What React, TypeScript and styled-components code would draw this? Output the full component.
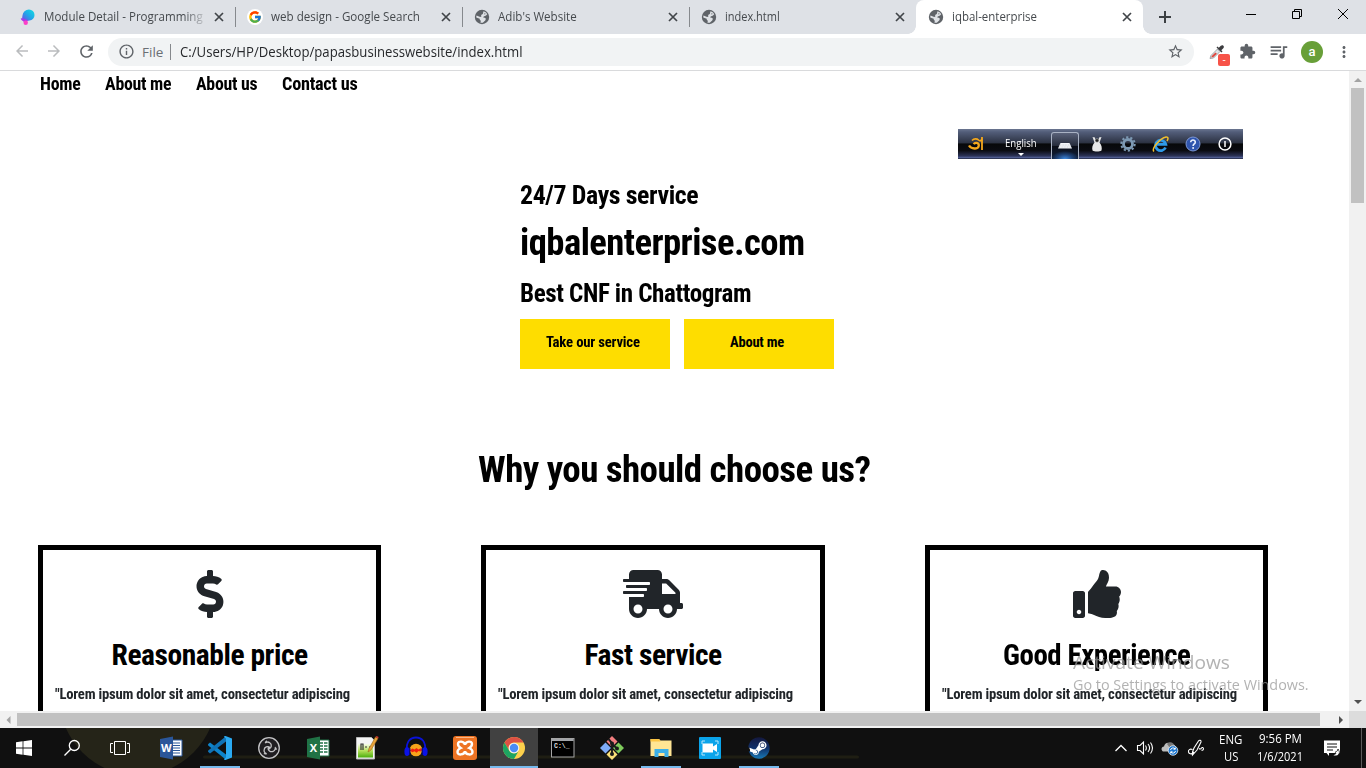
import React, { useLayoutEffect, useRef, useState } from "react";
import styled, { createGlobalStyle, css } from "styled-components";
import { FaDollarSign, FaShippingFast, FaThumbsUp, FaSteam } from "react-icons/fa";
import {
  MdArrowBack, MdArrowForward, MdRefresh, MdInfoOutline,
  MdStarBorder, MdExtension, MdQueueMusic, MdMoreVert,
} from "react-icons/md";
import { FcGoogle } from "react-icons/fc";

const GlobalStyle = createGlobalStyle`
  * { box-sizing: border-box; }
  html, body { margin: 0; padding: 0; overflow: hidden; background: #fff; }
  svg { display: block; flex: none; }
`;

const display = `Roboto, "Liberation Sans", sans-serif`;
const ui = `"Open Sans", "Noto Sans", sans-serif`;

/* ---------- text squeezed to a given width ---------- */
const FitBox = styled.span<{ $w: number; $lh: number }>`
  display: block;
  flex: none;
  width: ${(p) => p.$w}px;
  height: ${(p) => p.$lh}px;
  white-space: nowrap;
`;
const FitInner = styled.span<{ $size: number; $lh: number; $weight: number; $ui: boolean }>`
  display: inline-block;
  vertical-align: top;
  transform-origin: 0 0;
  font-family: ${(p) => (p.$ui ? ui : display)};
  font-stretch: ${(p) => (p.$ui ? "100%" : "75%")};
  letter-spacing: ${(p) => (p.$ui ? "0" : "-0.015em")};
  font-size: ${(p) => p.$size}px;
  font-weight: ${(p) => p.$weight};
  line-height: ${(p) => p.$lh}px;
`;
type FitProps = { w: number; size: number; lh: number; weight?: number; chrome?: boolean; children: string };
function Fit({ w, size, lh, weight = 750, chrome = false, children }: FitProps) {
  const ref = useRef<HTMLSpanElement>(null);
  const [k, setK] = useState(1);
  useLayoutEffect(() => {
    if (ref.current) setK(w / ref.current.offsetWidth);
  }, [w]);
  return (
    <FitBox $w={w} $lh={lh}>
      <FitInner ref={ref} $size={size} $lh={lh} $weight={weight} $ui={chrome} style={{ transform: `scaleX(${k})` }}>
        {children}
      </FitInner>
    </FitBox>
  );
}

/* ---------- window frame ---------- */
const Screen = styled.div`
  position: relative;
  width: 1366px;
  height: 768px;
  display: flex;
  flex-direction: column;
  overflow: hidden;
  background: #fff;
`;
const TabStrip = styled.div`
  display: flex;
  height: 34px;
  padding-left: 8px;
  background: #dee1e6;
`;
const TabItem = styled.div<{ $active?: boolean; $line?: boolean }>`
  position: relative;
  display: flex;
  align-items: center;
  width: 227px;
  height: 34px;
  padding: 0 11px 0 12px;
  color: #45494d;
  ${(p) => p.$line && css`
    &::after {
      content: "";
      position: absolute;
      right: -1px;
      top: 7px;
      width: 1px;
      height: 20px;
      background: #86898d;
    }
  `}
  ${(p) => p.$active && css`
    background: #fff;
    border-radius: 8px 8px 0 0;
    &::before, &::after {
      content: "";
      position: absolute;
      bottom: 0;
      width: 8px;
      height: 8px;
    }
    &::before { left: -8px; background: radial-gradient(circle at 0 0, transparent 7.5px, #fff 8px); }
    &::after { right: -8px; background: radial-gradient(circle at 100% 0, transparent 7.5px, #fff 8px); }
  `}
`;
const Favicon = styled.span`
  width: 16px;
  height: 16px;
  margin-right: 8px;
  color: #5f6368;
`;
const GoogleDisc = styled.span`
  display: flex;
  width: 16px;
  height: 16px;
  align-items: center;
  justify-content: center;
  border-radius: 50%;
  background: #fff;
`;
const TabTitle = styled.span<{ $fade?: boolean }>`
  flex: 1;
  overflow: hidden;
  ${(p) => p.$fade && css`mask-image: linear-gradient(90deg, #000 82%, transparent 97%);`}
`;
const WindowButtons = styled.div`
  display: flex;
  align-items: center;
  gap: 36px;
  height: 28px;
  margin-left: 75px;
`;
const NewTab = styled.div`
  display: flex;
  align-items: center;
  margin-left: 16px;
`;

const Toolbar = styled.div`
  display: flex;
  align-items: center;
  height: 37px;
  padding: 0 13px 1px 13px;
  border-bottom: 1px solid #d9dadc;
  color: #5f6368;
`;
const NavIcons = styled.div`
  display: flex;
  gap: 14px;
  width: 95px;
`;
const Address = styled.div`
  display: flex;
  flex: none;
  align-items: center;
  width: 1086px;
  height: 28px;
  padding: 0 10px;
  border-radius: 14px;
  background: #f1f3f4;
`;
const Rule = styled.span`
  width: 1px;
  height: 16px;
  margin: 0 9px 0 7px;
  background: #85888c;
`;
const UrlText = styled.span`
  flex: 1;
  color: #26282b;
`;
const FileLabel = styled.span`
  margin-left: 7px;
  color: #6b6f74;
`;
const Extensions = styled.div`
  display: flex;
  align-items: center;
  gap: 12px;
  margin-left: 14px;
`;
const Dropper = styled.span`
  position: relative;
  width: 18px;
  height: 18px;
  margin-right: 1px;
`;
const Badge = styled.span`
  position: absolute;
  left: 10px;
  top: 11px;
  width: 12px;
  height: 12px;
  border-radius: 2px;
  background: #f75348;
  color: #fff;
  text-align: center;
  font: 10px/11px ${ui};
`;
const Avatar = styled.span`
  width: 22px;
  height: 22px;
  border-radius: 50%;
  background: #689f38;
  color: #fff;
  text-align: center;
  font: 500 13px/21px Roboto, sans-serif;
`;

/* ---------- page ---------- */
const Viewport = styled.div`
  display: flex;
  height: 640px;
`;
const Page = styled.main`
  width: 1349px;
  height: 640px;
  overflow: hidden;
  color: #000;
`;
const Menu = styled.nav`
  display: flex;
  gap: 24.5px;
  padding-left: 40px;
`;
const Hero = styled.section`
  padding: 81px 0 0 520px;
`;
const Gap = styled.div<{ $top: number; $left?: number }>`
  margin-top: ${(p) => p.$top}px;
  margin-left: ${(p) => p.$left ?? 0}px;
`;
const Actions = styled.div`
  display: flex;
  gap: 14px;
  margin-top: 8px;
`;
const Action = styled.div`
  display: flex;
  justify-content: center;
  width: 150px;
  height: 50px;
  padding-right: 4px;
  background: #fedd00;
`;
const Question = styled.h2`
  display: flex;
  justify-content: center;
  margin: 76px 0 50px;
`;
const Cards = styled.section`
  display: grid;
  grid-template-columns: 343px 344px 343px;
  column-gap: 100px;
  padding-left: 38px;
`;
const Card = styled.article`
  display: flex;
  flex-direction: column;
  align-items: center;
  height: 300px;
  padding: 20px 12px 0;
  border: 5px solid #000;
`;
const CardIcon = styled.div`
  height: 48px;
  margin-bottom: 17px;
  color: #212529;
`;
const CardText = styled.div`
  align-self: flex-start;
  margin-top: 8px;
  color: #212529;
`;

const VTrack = styled.div`
  display: flex;
  flex-direction: column;
  align-items: center;
  justify-content: space-between;
  width: 17px;
  background: #f1f1f1;
`;
const VThumb = styled.div`
  width: 13px;
  height: 115px;
  margin-bottom: auto;
  background: #c1c1c1;
`;
const HTrack = styled.div`
  display: flex;
  align-items: center;
  height: 17px;
  background: #f1f1f1;
`;
const HThumb = styled.div`
  width: 1303px;
  height: 13px;
  background: #c1c1c1;
`;
const Corner = styled.div`
  width: 17px;
  height: 17px;
  background: #dcdcdc;
`;
const ArrowCell = styled.div<{ $w?: number }>`
  display: flex;
  align-items: center;
  justify-content: center;
  width: ${(p) => p.$w ?? 17}px;
  height: 17px;
`;

/* ---------- floating keyboard bar ---------- */
const KeyboardBar = styled.div`
  position: absolute;
  left: 958px;
  top: 129px;
  display: flex;
  align-items: center;
  width: 285px;
  height: 30px;
  padding-left: 10px;
  background: linear-gradient(#6a7590 0, #525d79 10%, #2c3242 46%, #07080a 50%, #0b0c12 72%, #2c3358 90%, #55639a 96%, #15182a 100%);
`;
const Lang = styled.div`
  display: flex;
  flex-direction: column;
  align-items: center;
  width: 32px;
  height: 30px;
  margin: 0 14px 0 19px;
  padding-top: 4px;
  color: #fff;
`;
const PressedKey = styled.div`
  display: flex;
  align-items: center;
  justify-content: center;
  align-self: flex-end;
  width: 28px;
  height: 27px;
  border: 1px solid #a9b2c4;
  border-bottom: 0;
  border-radius: 3px 3px 0 0;
  background: radial-gradient(ellipse 14px 8px at 50% 100%, #3f8ae0 0, rgba(38, 84, 150, 0.7) 55%, transparent 100%), linear-gradient(#5a627a, #262c3c 48%, #0a0d16 50%, #10203e);
`;
const BarIcons = styled.div`
  display: flex;
  align-items: center;
  gap: 16px;
  margin-left: 11px;
`;

const Watermark = styled.div`
  position: absolute;
  left: 1073px;
  top: 649px;
  color: rgba(148, 148, 148, 0.72);
`;

/* ---------- taskbar ---------- */
const Taskbar = styled.footer`
  position: relative;
  display: flex;
  height: 40px;
  background: #101010;
  color: #fff;
`;
const Backdrop = styled.svg`
  position: absolute;
  left: 0;
  top: 0;
`;
const SystemKeys = styled.div`
  position: relative;
  display: flex;
  width: 147px;
`;
const Apps = styled.div`
  position: relative;
  display: flex;
  gap: 1px;
`;
const Slot = styled.div<{ $bar?: "short" | "full" }>`
  position: relative;
  display: flex;
  align-items: center;
  justify-content: center;
  width: 48px;
  height: 40px;
  background: ${(p) => (p.$bar === "full" ? "#414141" : "transparent")};
  ${(p) => p.$bar && css`
    &::after {
      content: "";
      position: absolute;
      bottom: 0;
      left: ${p.$bar === "full" ? 0 : 4}px;
      right: ${p.$bar === "full" ? 0 : 4}px;
      height: 2px;
      background: #76b9ed;
    }
  `}
`;
const Tray = styled.div`
  display: flex;
  align-items: center;
  margin-left: 331px;
`;
const TrayIcons = styled.div`
  display: flex;
  align-items: center;
  gap: 7.5px;
  width: 105px;
`;
const Stack = styled.div<{ $w: number }>`
  display: flex;
  flex-direction: column;
  align-items: center;
  width: ${(p) => p.$w}px;
`;
const Notice = styled.div`
  margin-left: 21px;
`;
const PeekEdge = styled.div`
  width: 1px;
  height: 40px;
  margin-left: 20px;
  background: #5a5a5a;
`;

/* ---------- drawings ---------- */
const Globe = () => (
  <svg width="16" height="16" viewBox="0 0 16 16">
    <circle cx="8" cy="8" r="7.200" fill="#5f6368" />
    <path d="M9.500 2.300c1.600.4 3 1.500 3.700 3L12 6.500c-.6.6-1.700.3-2.200 1L9 8.200 11.200 9c.9.500.7 1.700 0 2.400L8.800 13.700c-.9.100-1.800 0-2.500-.3l.7-1.700c-.9-.4-1.400-1-1.300-2L2.300 8.500c-.1-.8 0-1.300.2-1.900l3.700 1.300 1.200-.5-.3-1.500 1.700-1z" fill="#dfe2e6" />
    <path d="M10.500 3.800l1.500 1-1.300 1-1-.8z" fill="#5f6368" opacity=".5" />
  </svg>
);
const CloseX = () => (
  <svg width="10" height="10" viewBox="0 0 10 10"><path d="M1 1l8 8M9 1L1 9" stroke="#414549" strokeWidth="1.700" /></svg>
);
const Swirl = () => (
  <svg width="16" height="16" viewBox="0 0 16 16">
    <defs><linearGradient id="sw" x1="1" y1="0" x2="0" y2="1"><stop offset="0" stopColor="#14dfe0" /><stop offset=".5" stopColor="#1fa8e8" /><stop offset="1" stopColor="#7545e8" /></linearGradient></defs>
    <path d="M2.500 6.500A6.400 6.400 0 0 1 9 .5a5.500 5.500 0 0 1 5.500 5.500 5.300 5.300 0 0 1-5 5.500C7 11.700 6 12.500 4 11.800 1.500 11 2.200 8.500 2.500 6.500z" fill="url(#sw)" />
    <path d="M.8 9.500c2-1 4 .5 7.200 1.800-.8.500-1 1-1 2.200H4c0-1.600-3.100-2-3.200-4z" fill="#a83ae6" />
    <circle cx="5.700" cy="13.700" r="2.200" fill="#fb3fc8" />
  </svg>
);
const DropperArt = () => (
  <svg width="18" height="18" viewBox="0 0 18 18">
    <path d="M2 15.500L3 12.500l6.500-6.500 2.500 2.500-6.500 6.500z" fill="#dfe3e6" stroke="#8b9094" strokeWidth=".8" />
    <path d="M3.200 14.500l.8-1.700 3.500-3.300 1.400 1.300-3.500 3.200z" fill="#e0453c" />
    <path d="M8.500 4.500l5 5 1-1-1.200-1.300 2-2C17 3.500 14.800 1 12.800 2.700l-2 2-1.300-1.200z" fill="#3c3c3f" />
  </svg>
);
const Tri = ({ dir, dim }: { dir: "up" | "down" | "left" | "right"; dim?: boolean }) => {
  const d = { up: "M0 6l4-4 4 4z", down: "M0 1h8l-4 4z", left: "M5.500 0v8l-4-4z", right: "M2 0v8l4-4z" }[dir];
  return <svg width="8" height="8" viewBox="0 0 8 8"><path d={d} fill={dim ? "#a3a3a3" : "#505050"} /></svg>;
};

const AvroMark = () => (
  <svg width="18" height="16" viewBox="0 0 18 16" fill="none" stroke="#f5a81c">
    <path d="M1 9.500c2 3.500 9.500 4.500 9.800 0 .1-3-4-3.500-5-1.200" strokeWidth="2.300" />
    <path d="M4 4.500c2-2 5-2 6.500-.5 1.500 1.500 2.500 1 3.500-1" strokeWidth="1.700" />
    <path d="M14 1v13" strokeWidth="1.800" />
  </svg>
);
const KeyboardArt = () => (
  <svg width="14" height="8" viewBox="0 0 14 8"><path d="M2.500 1h9L14 6.500H0z" fill="#f4f6fa" /><path d="M2 3h10M1 5h12" stroke="#aab0ba" strokeWidth=".5" strokeDasharray="1 .6" /></svg>
);
const MouseArt = () => (
  <svg width="14" height="16" viewBox="0 0 14 16"><path d="M2.500 1l2 5.500C2.300 9 1.800 12 2.500 14.500c2 1.300 7 1.300 9 0C12.200 12 11.700 9 9.500 6.500l2-5.500-2.500.5L8.500 5h-3L5 1.500z" fill="#e8e8e8" /><circle cx="7" cy="4.500" r="1.800" fill="#222" stroke="#bbb" strokeWidth=".6" /></svg>
);
const GearArt = () => (
  <svg width="16" height="16" viewBox="0 0 16 16"><circle cx="8" cy="8" r="6.700" fill="none" stroke="#7d99b3" strokeWidth="2" strokeDasharray="2.250 1.960" /><circle cx="8" cy="8" r="4.500" fill="none" stroke="#7d99b3" strokeWidth="2.800" /></svg>
);
const ExplorerE = () => (
  <svg width="17" height="17" viewBox="0 0 17 17" fill="none">
    <path d="M13.500 11.500A5.200 5.200 0 1 1 13.800 8.300H5" stroke="#2f9ae8" strokeWidth="2.800" />
    <path d="M2 15.500C-1 13 8 2 14 1c3-.3 2 2.500 1 4" stroke="#f3bf2c" strokeWidth="1.500" />
  </svg>
);
const HelpArt = () => (
  <svg width="16" height="16" viewBox="0 0 16 16"><circle cx="8" cy="8" r="7" fill="#2f55ae" stroke="#7d97d4" /><path d="M5.700 6.200c0-3 4.700-2.800 4.600 0 0 1.700-2.200 1.800-2.200 3.700" fill="none" stroke="#e8eefc" strokeWidth="1.600" /><circle cx="8.100" cy="12" r="1" fill="#e8eefc" /></svg>
);
const PowerArt = () => (
  <svg width="16" height="16" viewBox="0 0 16 16"><circle cx="8" cy="8" r="5.900" fill="none" stroke="#fff" strokeWidth="1.500" /><path d="M8 5v6" stroke="#fff" strokeWidth="1.500" /></svg>
);

const WinLogo = () => (
  <svg width="16" height="16" viewBox="0 0 16 16" fill="#fff"><path d="M0 2.200L6.600 1.300v6.300H0zM7.400 1.200L16 0v7.600H7.400zM0 8.400h6.600v6.300L0 13.800zM7.400 8.400H16V16l-8.600-1.200z" /></svg>
);
const SearchArt = () => (
  <svg width="18" height="18" viewBox="0 0 18 18" fill="none" stroke="#fff" strokeWidth="1.300"><circle cx="11.300" cy="6.500" r="5" /><path d="M7.700 10.200L1.500 16.500" /></svg>
);
const TaskView = () => (
  <svg width="20" height="16" viewBox="0 0 20 16" fill="none" stroke="#fff"><path d="M4.500 1.500h11v13h-11zM3 3.500H.5v9H3M17 3.500h2.500v9H17" /></svg>
);
const OfficeDoc = ({ color, dark, letter }: { color: string; dark: string; letter: string }) => (
  <svg width="24" height="24" viewBox="0 0 24 24">
    <path d="M12 4h11v16H12z" fill="#fff" stroke={color} />
    {letter === "W"
      ? <path d="M14 7h7M14 9.500h7M14 12h7M14 14.500h7M14 17h7" stroke={color} strokeWidth="1.200" />
      : <path d="M14 7h3M18 7h3.500M14 10h3M18 10h3.500M14 13h3M18 13h3.500M14 16h3M18 16h3.500" stroke={color} strokeWidth="1.700" />}
    <path d="M1 3l13-2.500v23L1 21z" fill={dark} />
    <text x="7.400" y="16" textAnchor="middle" fontSize="11" fontWeight="700" fontFamily="Open Sans, sans-serif" fill="#fff">{letter}</text>
  </svg>
);
const CodeArt = () => (
  <svg width="24" height="24" viewBox="0 0 24 24">
    <path d="M0 8.300L2 6.400 18 18.500v5.300L.2 9.500z" fill="#0d84cc" />
    <path d="M0 15.700l2 1.900L18 5.500V.2L.2 14.500z" fill="#1073b6" />
    <path d="M17.500 0L24 2.500v19L17.500 24c-1 0-1.500-.5-1.500-1l2-1.500v-19L16 1c0-.5.500-1 1.500-1z" fill="#2aaaf2" />
  </svg>
);
const ObsArt = () => (
  <svg width="24" height="24" viewBox="0 0 24 24" fill="none">
    <circle cx="12" cy="12" r="10.300" fill="#201e21" stroke="#c4c4c6" strokeWidth="1.300" />
    <g stroke="#c4c4c6" strokeWidth="1.300">
      {[0, 120, 240].map((a) => <path key={a} transform={`rotate(${a} 12 12)`} d="M12 13c2.600-1 3.200-4.500.8-6.200-1.500-1.200-3.700-1-4.600.4M8.200 7.200c.3-1.200.8-1.900 1.600-2.400" />)}
    </g>
    <circle cx="12" cy="12" r="1.200" fill="#c4c4c6" />
  </svg>
);
const NotepadArt = () => (
  <svg width="24" height="24" viewBox="0 0 24 24">
    <defs><linearGradient id="np" x1="0" y1="0" x2="0" y2="1"><stop offset="0" stopColor="#f6fbe9" /><stop offset=".5" stopColor="#b4e05a" /><stop offset="1" stopColor="#4cae0c" /></linearGradient></defs>
    <path d="M1.500 1.500h15l3 3v18.500h-18z" fill="#f4f4f4" stroke="#b9b9b9" />
    <path d="M3 8h15v13.500H3z" fill="url(#np)" />
    <path d="M6 14V8h2v6M10 11h2M14 11h2" fill="none" stroke="#333" strokeWidth="1.200" />
    <path d="M13 16l1-3.500L20.500 1l2.500 1.500L16 14z" fill="#e8a33a" stroke="#9a6418" strokeWidth=".6" />
    <path d="M20.500 1l2.500 1.500.6-1.500L21.700 0z" fill="#d23b2e" />
  </svg>
);
const AudacityArt = () => (
  <svg width="24" height="24" viewBox="0 0 24 24">
    <circle cx="12" cy="14" r="6.300" fill="#f7a51b" />
    <path d="M5.500 14.500l3-2 2 1 2-1.500 2 1.500 2-1.200 2 1.700-2 1.500-2-.5-2 1.700-2-1.500-2 1z" fill="#f02010" />
    <path d="M3 14C2 6 6 1.500 12 1.500S22 6 21 14" fill="none" stroke="#0a12d8" strokeWidth="1.800" />
    <ellipse cx="3" cy="15.500" rx="2.600" ry="4.600" fill="#0b12e6" /><ellipse cx="21" cy="15.500" rx="2.600" ry="4.600" fill="#0b12e6" />
    <path d="M5.800 12v7M18.200 12v7" stroke="#060a80" strokeWidth="1.200" />
  </svg>
);
const XamppArt = () => (
  <svg width="24" height="24" viewBox="0 0 24 24">
    <rect width="24" height="24" rx="3" fill="#ee7424" /><path d="M3 1.500h18" stroke="#f9b788" />
    <path d="M12 8.700c-.8-3.700-7-4.300-7-.7 0 2 1 3 2.700 4C5.500 13 4.500 14 4.500 16c0 3.500 6.700 3.200 7.500-.7.800 3.900 7.500 4.200 7.500.7 0-2-1-3-3.200-4 1.700-1 2.700-2 2.700-4 0-3.600-6.200-3-7 .7z" fill="none" stroke="#fff" strokeWidth="2.400" />
  </svg>
);
const ChromeArt = () => (
  <svg width="24" height="24" viewBox="0 0 24 24">
    <circle cx="12" cy="12" r="11" fill="#fdd04c" />
    <path d="M2.470 6.500A11 11 0 0 1 21.530 6.500H12A5.500 5.500 0 0 0 7.240 14.750z" fill="#dd5144" />
    <path d="M2.470 6.500A11 11 0 0 0 12 23L16.760 14.750A5.500 5.500 0 0 1 7.240 14.750z" fill="#1da462" />
    <circle cx="12" cy="12" r="5.300" fill="#f1f1f1" /><circle cx="12" cy="12" r="4.200" fill="#4a8bf5" />
  </svg>
);
const ConsoleArt = () => (
  <svg width="24" height="20" viewBox="0 0 24 20">
    <rect x=".5" y=".5" width="22.500" height="18.500" fill="#000" stroke="#a5a5a5" /><path d="M1 2h21.500" stroke="#d8dde2" strokeWidth="1.500" />
    <text x="3" y="9.500" fontSize="6.500" fontWeight="700" fontFamily="Liberation Mono, monospace" fill="#ddd">C:\_</text>
  </svg>
);
const GitArt = () => (
  <svg width="24" height="24" viewBox="0 0 24 24">
    <path d="M12 0l5.500 5.500L12 11 6.500 5.500z" fill="#f27f80" /><path d="M18.500 6.500L24 12l-5.500 5.500L13 12z" fill="#7fcc5c" />
    <path d="M12 13l5.500 5.500L12 24l-5.500-5.500z" fill="#fbe078" /><path d="M5.500 6.500L11 12l-5.500 5.500L0 12z" fill="#7fabf8" />
    <path d="M8.500 3L12 7v11M12 8l5 4.500" fill="none" stroke="#1b1b1b" strokeWidth="1.900" />
    <circle cx="12" cy="18" r="2" fill="#1b1b1b" /><circle cx="17" cy="12.500" r="2" fill="#1b1b1b" /><circle cx="12" cy="7.500" r="2" fill="#1b1b1b" />
  </svg>
);
const FolderArt = () => (
  <svg width="24" height="24" viewBox="0 0 24 24">
    <path d="M1.500 3h8.500l1.500 1.500h11V20h-21z" fill="#ffe594" /><path d="M1.500 3h8.500l1.500 2.500h-10z" fill="#fcc544" />
    <path d="M5.500 21v-8h14v8h-4v-4h-6v4z" fill="#3cb0e8" />
  </svg>
);
const CameraArt = () => (
  <svg width="24" height="24" viewBox="0 0 24 24">
    <rect x="1" y="1" width="22" height="22" rx="1" fill="#0ba4ea" />
    <path d="M4 8V5h3M17 5h3v3M4 16v3h3M17 19h3v-3" fill="none" stroke="#b9e6fb" />
    <path d="M4.500 7.500H15v3l4-2.500v8l-4-2.500v3H4.500z" fill="#fff" />
  </svg>
);
const SteamDisc = styled.span`
  display: block;
  width: 22px;
  height: 22px;
  border-radius: 50%;
  background: radial-gradient(circle, #fff 60%, transparent 62%);
  svg { fill: url(#steam); }
`;
const SteamArt = () => (
  <SteamDisc>
    <svg width="0" height="0"><defs><linearGradient id="steam" x1="0" y1="0" x2="0" y2="1"><stop offset="0" stopColor="#14183e" /><stop offset=".5" stopColor="#10306a" /><stop offset="1" stopColor="#1878b4" /></linearGradient></defs></svg>
    <FaSteam size={22} />
  </SteamDisc>
);

const TrayArt = () => (
  <TrayIcons>
    <svg width="14" height="10" viewBox="0 0 14 10"><path d="M1.500 8L7 2.500 12.500 8" fill="none" stroke="#fff" strokeWidth="1.300" /></svg>
    <svg width="18" height="16" viewBox="0 0 18 16" fill="none" stroke="#fff" strokeWidth="1.100"><path d="M1.500 5.500h2.500l3.500-3.500v12L4 10.500H1.500z" /><path d="M9.500 5.500c1 1.500 1 3.500 0 5M12 4c2 2.500 2 5.500 0 8M14.500 2.500c2.500 3.500 2.500 7.500 0 11" /></svg>
    <svg width="18" height="16" viewBox="0 0 18 16"><path d="M2 11.500C-.5 10 .5 6.500 3 6.500 3.500 3 7.500 1.500 10 4c2.500-.5 4.500 1 4.500 3v4.500z" fill="#bdbdbd" /><path d="M6 4c2-3 7-2 7.500 2L9 8z" fill="#777" /><circle cx="12" cy="10.500" r="4.800" fill="#1f78d0" stroke="#fff" strokeWidth=".7" /><path d="M9.500 10a2.600 2.600 0 0 1 4.500-1.200M14.500 11a2.600 2.600 0 0 1-4.500 1.200M14.300 7.500v1.700h-1.800M9.700 13.500v-1.700h1.800" fill="none" stroke="#fff" /></svg>
    <svg width="18" height="18" viewBox="0 0 18 18" fill="none" stroke="#fff" strokeWidth="1.100"><path d="M5.500 10.500C3 9.500 1 11 1.500 13c.5 2 3 2.500 4.500 1l1-1M5.500 13L7 9l4.500-7c1-1.500 3-.5 2.500 1L10 11l-4.500 5zM12 9.500c1 1 2 .5 2.500-.5s2-.5 2 .7-1 1.800-2 1.300" /></svg>
  </TrayIcons>
);

const tabs = [
  { title: "Module Detail - Programming", w: 159, icon: <Swirl />, line: true, fade: true },
  { title: "web design - Google Search", w: 149, icon: <GoogleDisc><FcGoogle size={14} /></GoogleDisc>, line: true },
  { title: "Adib's Website", w: 79, icon: <Globe />, line: true },
  { title: "index.html", w: 55, icon: <Globe /> },
  { title: "iqbal-enterprise", w: 85, icon: <Globe />, active: true },
];
const menu: [string, number][] = [["Home", 40.5], ["About me", 66.5], ["About us", 61.5], ["Contact us", 75]];
const cards = [
  { title: "Reasonable price", w: 196, icon: <FaDollarSign size={48} /> },
  { title: "Fast service", w: 137, icon: <FaShippingFast size={48} style={{ width: 60 }} /> },
  { title: "Good Experience", w: 187, icon: <FaThumbsUp size={48} /> },
];
const apps: { art: React.ReactNode; bar?: "short" | "full" }[] = [
  { art: <OfficeDoc color="#2b579a" dark="#2a5699" letter="W" /> },
  { art: <CodeArt />, bar: "short" },
  { art: <ObsArt /> },
  { art: <OfficeDoc color="#217346" dark="#207245" letter="X" /> },
  { art: <NotepadArt /> },
  { art: <AudacityArt /> },
  { art: <XamppArt /> },
  { art: <ChromeArt />, bar: "full" },
  { art: <ConsoleArt /> },
  { art: <GitArt /> },
  { art: <FolderArt />, bar: "short" },
  { art: <CameraArt /> },
  { art: <SteamArt />, bar: "short" },
];

export default function App() {
  return (
    <Screen>
      <GlobalStyle />
      <TabStrip>
        {tabs.map((t) => (
          <TabItem key={t.title} $active={t.active} $line={t.line}>
            <Favicon>{t.icon}</Favicon>
            <TabTitle $fade={t.fade}><Fit w={t.w} size={12} lh={18} weight={400} chrome>{t.title}</Fit></TabTitle>
            <CloseX />
          </TabItem>
        ))}
        <NewTab><svg width="12" height="12" viewBox="0 0 12 12"><path d="M6 0v12M0 6h12" stroke="#3c4043" strokeWidth="2" /></svg></NewTab>
        <WindowButtons>
          <svg width="10" height="10" viewBox="0 0 10 10"><path d="M0 5.500h10" stroke="#000" /></svg>
          <svg width="10" height="10" viewBox="0 0 10 10" fill="none" stroke="#000"><path d="M.5 2.500h7v7h-7zM2.500 2.500v-2h7v7h-2" /></svg>
          <svg width="10" height="10" viewBox="0 0 10 10"><path d="M0 0l10 10M10 0L0 10" stroke="#000" /></svg>
        </WindowButtons>
      </TabStrip>
      <Toolbar>
        <NavIcons>
          <MdArrowBack size={18} color="#babcbe" />
          <MdArrowForward size={18} color="#babcbe" />
          <MdRefresh size={19} />
        </NavIcons>
        <Address>
          <MdInfoOutline size={17} />
          <FileLabel><Fit w={21} size={13.500} lh={20} weight={400} chrome>File</Fit></FileLabel>
          <Rule />
          <UrlText><Fit w={343} size={14} lh={20} weight={400} chrome>C:/Users/HP/Desktop/papasbusinesswebsite/index.html</Fit></UrlText>
          <MdStarBorder size={17} />
        </Address>
        <Extensions>
          <Dropper><DropperArt /><Badge>-</Badge></Dropper>
          <MdExtension size={17} />
          <MdQueueMusic size={21} />
          <Avatar>a</Avatar>
          <MdMoreVert size={18} />
        </Extensions>
      </Toolbar>

      <Viewport>
        <Page>
          <Menu>{menu.map(([label, w]) => <Fit key={label} w={w} size={18.500} lh={26}>{label}</Fit>)}</Menu>
          <Hero>
            <Fit w={178} size={25} lh={36}>24/7 Days service</Fit>
            <Gap $top={4}><Fit w={285} size={36.500} lh={50}>iqbalenterprise.com</Fit></Gap>
            <Gap $top={7}><Fit w={231} size={25.500} lh={36}>Best CNF in Chattogram</Fit></Gap>
            <Actions>
              <Action><Fit w={94} size={14.500} lh={48}>Take our service</Fit></Action>
              <Action><Fit w={54} size={14.500} lh={48}>About me</Fit></Action>
            </Actions>
          </Hero>
          <Question><Fit w={393} size={36.500} lh={50}>Why you should choose us?</Fit></Question>
          <Cards>
            {cards.map((c) => (
              <Card key={c.title}>
                <CardIcon>{c.icon}</CardIcon>
                <Fit w={c.w} size={29.500} lh={40}>{c.title}</Fit>
                <CardText><Fit w={295.500} size={14.500} lh={24}>"Lorem ipsum dolor sit amet, consectetur adipiscing</Fit></CardText>
              </Card>
            ))}
          </Cards>
        </Page>
        <VTrack>
          <ArrowCell><Tri dir="up" dim /></ArrowCell>
          <VThumb />
          <ArrowCell><Tri dir="down" /></ArrowCell>
        </VTrack>
      </Viewport>
      <HTrack>
        <ArrowCell><Tri dir="left" dim /></ArrowCell>
        <HThumb />
        <ArrowCell $w={12} />
        <ArrowCell><Tri dir="right" /></ArrowCell>
        <Corner />
      </HTrack>

      <Taskbar>
        <Backdrop width="1366" height="40" viewBox="0 0 1366 40">
          <circle cx="138" cy="-31" r="78.500" fill="#252418" />
          <rect x="203" y="27.500" width="656" height="3" rx="1.500" fill="#1f1e13" />
        </Backdrop>
        <SystemKeys>
          <Slot><WinLogo /></Slot><Slot><SearchArt /></Slot><Slot><TaskView /></Slot>
        </SystemKeys>
        <Apps>{apps.map((a, i) => <Slot key={i} $bar={a.bar}>{a.art}</Slot>)}</Apps>
        <Tray>
          <TrayArt />
          <Stack $w={23}>
            <Fit w={23} size={12} lh={17} weight={400} chrome>ENG</Fit>
            <Fit w={14} size={12} lh={17} weight={400} chrome>US</Fit>
          </Stack>
          <Gap $top={-2} $left={15}>
            <Stack $w={46}>
              <Fit w={43} size={12} lh={18} weight={400} chrome>9:56 PM</Fit>
              <Fit w={46} size={12} lh={17} weight={400} chrome>1/6/2021</Fit>
            </Stack>
          </Gap>
          <Notice>
            <svg width="17" height="17" viewBox="0 0 17 17"><path d="M0 .5h16V13H5v3l-2.500-3H0z" fill="#fff" /><path d="M3 4h10M3 7h10M3 10h6" stroke="#101010" /><path d="M9 15.500c2 1 5 .5 6-1.500s0-3-1-5c-.5 2-1 2.500-2 2.500s-.5 2 0 2.500" fill="#fff" stroke="#101010" strokeWidth=".8" /></svg>
          </Notice>
          <PeekEdge />
        </Tray>
      </Taskbar>

      <KeyboardBar>
        <AvroMark />
        <Lang>
          <Fit w={32} size={10.500} lh={20} weight={500} chrome>English</Fit>
          <svg width="6" height="3" viewBox="0 0 6 3"><path d="M0 0h6L3 3z" fill="#fff" /></svg>
        </Lang>
        <PressedKey><KeyboardArt /></PressedKey>
        <BarIcons><MouseArt /><GearArt /><ExplorerE /><HelpArt /><PowerArt /></BarIcons>
      </KeyboardBar>
      <Watermark>
        <Fit w={157} size={19} lh={26} weight={400} chrome>Activate Windows</Fit>
        <Fit w={236} size={14.500} lh={20} weight={400} chrome>Go to Settings to activate Windows.</Fit>
      </Watermark>
    </Screen>
  );
}
